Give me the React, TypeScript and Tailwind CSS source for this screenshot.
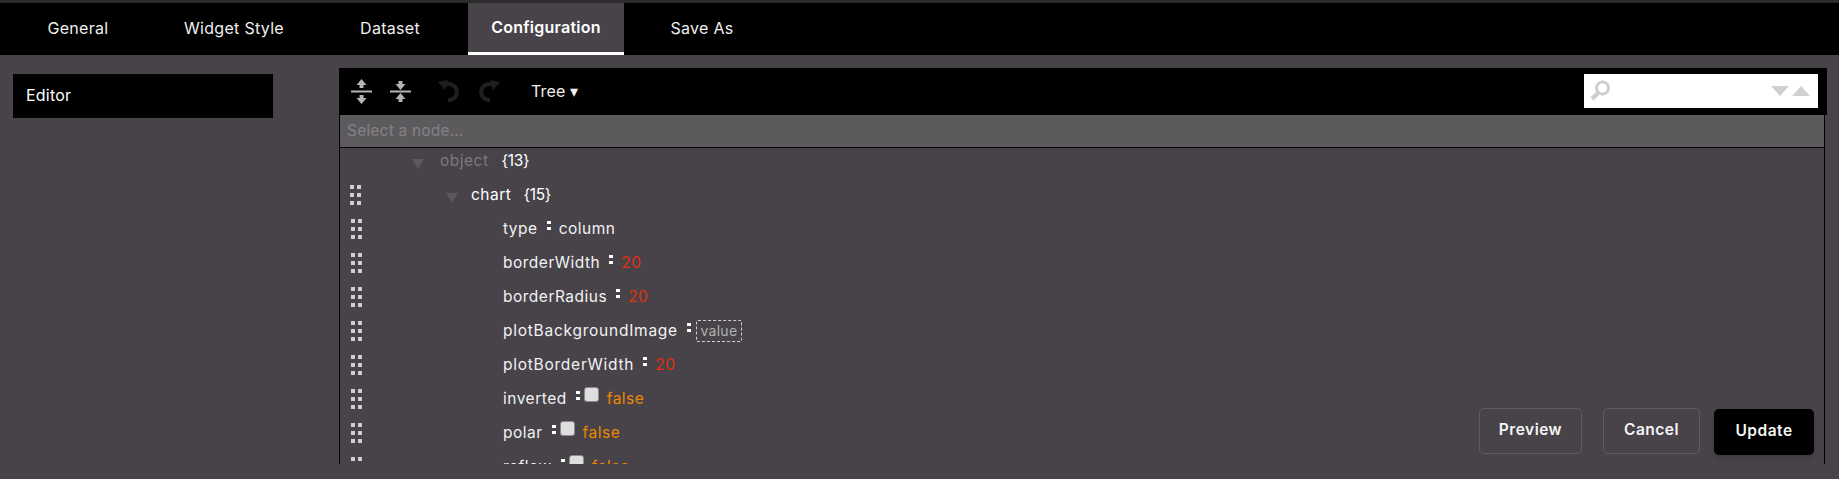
import React from "react";

const tabs = ["General", "Widget Style", "Dataset", "Configuration", "Save As"];

function Grip() {
  return (
    <div className="grid w-[11px] grid-cols-2 gap-x-[3px] gap-y-[4px]">
      {[0, 1, 2, 3, 4, 5].map((i) => (
        <span key={i} className="h-[4px] w-[4px] bg-[#d0d0d0]" />
      ))}
    </div>
  );
}

function Tri() {
  return <span className="mt-[6px] h-0 w-0 border-x-[6px] border-t-[10px] border-x-transparent border-t-[#5c595d]" />;
}

function Colon() {
  return (
    <span className="ml-[9px] mr-[8px] mb-[6px] flex flex-col gap-[3px]">
      <span className="h-[3px] w-[4px] bg-white" />
      <span className="h-[3px] w-[4px] bg-white" />
    </span>
  );
}

function Check() {
  return <span className="mb-[8px] ml-[-4px] mr-[8px] h-[15px] w-[15px] rounded-[3px] border border-[#8a8a8a] bg-[#dedede]" />;
}

function Field({ name, wide, children }: { name: string; wide?: boolean; children: React.ReactNode }) {
  return (
    <div className="flex h-[34px] items-center pl-[11px]">
      <Grip />
      <div className="ml-[141px] flex items-center pb-[1px] text-[#f2f2f2]">
        <span className={wide ? "tracking-[0.75px]" : ""}>{name}</span>
        <Colon />
        {children}
      </div>
    </div>
  );
}

const Num = () => <span className="text-[#e0300f]">20</span>;
const Bool = () => <span className="text-[#ee8800]">false</span>;

export default function App() {
  return (
    <div className="flex h-[479px] w-[1839px] flex-col overflow-hidden bg-[#474349] font-['Inter',sans-serif] text-[15.5px] tracking-[0.5px] text-white">
      <div className="h-[3px] bg-[#2b2b2b]" />
      <div className="flex h-[52px] bg-black">
        {tabs.map((t) => (
          <div
            key={t}
            className={
              t === "Configuration"
                ? "flex w-[156px] items-center justify-center border-b-[3px] border-white bg-[#474349] pb-[2px] text-[16px] font-semibold tracking-[0.25px]"
                : "flex w-[156px] items-center justify-center pb-[2px] text-[16px] tracking-[0.3px] text-[#efefef]"
            }
          >
            {t}
          </div>
        ))}
      </div>
      <div className="flex flex-1">
        <div className="ml-[13px] mt-[19px] flex h-[44px] w-[260px] items-center bg-black pb-[2px] pl-[13px] text-[16px] tracking-[0.2px]">Editor</div>
        <div className="ml-[66px] mt-[13px] flex w-[1488px] flex-col">
          <div className="flex h-[47px] items-center bg-black pb-[1px] pl-[12px]">
            <svg width="21" height="25" viewBox="0 0 21 25" fill="#b4b4b4">
              <path d="M10.500 0l5 6h-10z M8.500 6h4v3h-4z M0 11.500h21v2H0z M8.500 16h4v3h-4z M10.500 25l-5-6h10z" />
            </svg>
            <svg className="ml-[18px]" width="21" height="21" viewBox="0 0 21 21" fill="#b4b4b4">
              <path d="M8.500 0h4v3h-4z M10.500 9l-5-6h10z M0 9.500h21v2H0z M10.500 12l5 6h-10z M8.500 18h4v3h-4z" />
            </svg>
            <svg className="ml-[26px]" width="24" height="24" viewBox="0 0 24 24" fill="none">
              <path d="M8 6a8 8 0 1 1 3 15" stroke="#1f1f1f" strokeWidth="4" />
              <path d="M1 3l10-2-3 10z" fill="#1f1f1f" />
            </svg>
            <svg className="ml-[16px]" width="24" height="24" viewBox="0 0 24 24" fill="none">
              <path d="M16 6a8 8 0 1 0-3 15" stroke="#1f1f1f" strokeWidth="4" />
              <path d="M23 3L13 1l3 10z" fill="#1f1f1f" />
            </svg>
            <span className="ml-[30px] text-[16px] tracking-[0.2px] text-[#efefef]">Tree ▾</span>
            <div className="ml-auto mr-[9px] flex h-[34px] w-[234px] items-center bg-white pl-[5px] pr-[8px]">
              <svg width="22" height="22" viewBox="0 0 22 22" fill="none">
                <circle cx="13.500" cy="8" r="6" stroke="#cfcfcf" strokeWidth="3" />
                <path d="M9 13l-6 6" stroke="#cfcfcf" strokeWidth="4.500" />
              </svg>
              <span className="ml-auto h-0 w-0 border-x-[9px] border-t-[10px] border-x-transparent border-t-[#d0d0d0]" />
              <span className="ml-[3px] h-0 w-0 border-x-[9px] border-b-[10px] border-x-transparent border-b-[#d0d0d0]" />
            </div>
          </div>
          <div className="flex h-[33px] w-[1486px] items-center border-x border-b border-black bg-[#5c5a5d] pl-[7px] tracking-[0.2px] text-[#848285]">Select a node...</div>
          <div className="h-[316px] w-[1486px] overflow-hidden border-x border-black">
            <div className="-mt-[4px]">
              <div className="flex h-[34px] items-center pl-[72px]">
                <Tri />
                <span className="ml-[16px] pb-[1px] text-[#7c797d]">object</span>
                <span className="ml-[13px] pb-[1px] tracking-[-0.3px]">{"{13}"}</span>
              </div>
              <div className="flex h-[34px] items-center pl-[10px]">
                <Grip />
                <span className="ml-[85px]" />
                <Tri />
                <span className="ml-[13px] pb-[1px]">chart</span>
                <span className="ml-[12px] pb-[1px] tracking-[-0.3px]">{"{15}"}</span>
              </div>
              <Field name="type"><span>column</span></Field>
              <Field name="borderWidth"><Num /></Field>
              <Field name="borderRadius"><Num /></Field>
              <Field name="plotBackgroundImage" wide>
                <span className="-ml-[3px] flex h-[22px] w-[46px] items-center justify-center rounded-[2px] border border-dashed border-[#cfcfcf] text-[14px] tracking-[0.3px] text-[#b0b0b0]">value</span>
              </Field>
              <Field name="plotBorderWidth" wide><Num /></Field>
              <Field name="inverted"><Check /><Bool /></Field>
              <Field name="polar"><Check /><Bool /></Field>
              <Field name="reflow"><Check /><Bool /></Field>
            </div>
          </div>
        </div>
      </div>
      <div className="absolute left-[1479px] top-[408px] flex items-start text-[15.5px] font-semibold tracking-[0.5px] text-[#f5f5f5]">
        <button className="h-[46px] w-[103px] rounded-[5px] border border-[#5f5b61] pb-[2px]">Preview</button>
        <button className="ml-[21px] h-[46px] w-[97px] rounded-[5px] border border-[#5f5b61] pb-[2px]">Cancel</button>
        <button className="ml-[14px] mt-[1px] h-[46px] w-[100px] rounded-[5px] bg-black pb-[2px] shadow-md">Update</button>
      </div>
    </div>
  );
}
